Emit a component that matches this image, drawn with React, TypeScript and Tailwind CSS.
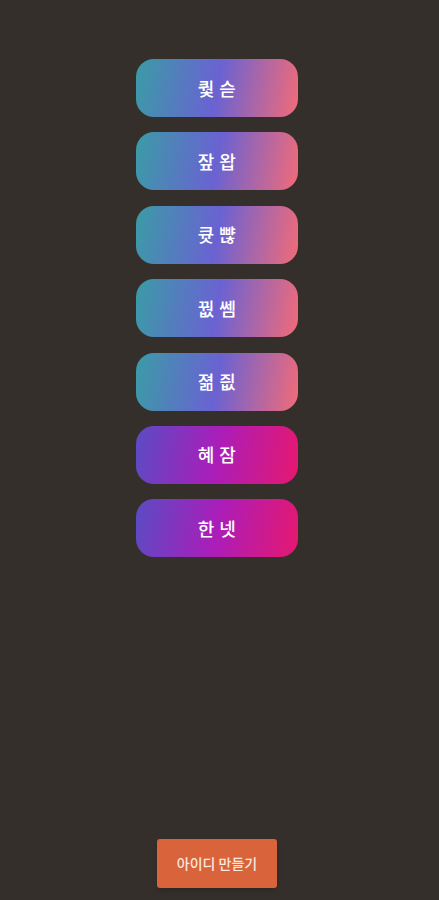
import React from "react";

const words = [
  { label: "퀓 슫", hot: false },
  { label: "잪 왑", hot: false },
  { label: "큣 뺞", hot: false },
  { label: "꿦 쎔", hot: false },
  { label: "졂 즶", hot: false },
  { label: "혜 잠", hot: true },
  { label: "한 넷", hot: true },
];

function WordButton({ label, hot }: { label: string; hot: boolean }) {
  return (
    <button
      className={
        hot
          ? "w-[162px] h-[58px] rounded-[18px] bg-linear-[100deg] from-[#5a4cc4] via-[#ab1db9] to-[#e6186f] text-[18px] font-medium text-white tracking-wide"
          : "w-[162px] h-[58px] rounded-[18px] bg-linear-[100deg] from-[#3a9ca6] via-[#6a62d2] to-[#f26b78] text-[18px] font-medium text-white tracking-wide"
      }
    >
      {label}
    </button>
  );
}

export default function App() {
  return (
    <div
      className="min-h-[900px] bg-[#342f2b] flex flex-col items-center pt-[59px] pb-[12px] pr-[5px]"
      style={{ fontFamily: '"Noto Sans CJK KR", "Noto Sans", sans-serif' }}
    >
      <div className="flex flex-col gap-[15.4px]">
        {words.map((w) => (
          <WordButton key={w.label} label={w.label} hot={w.hot} />
        ))}
      </div>
      <button className="mt-auto w-[120px] h-[49px] rounded-[3px] bg-[#d9633a] text-[14px] font-medium text-[#f8e9df] shadow-md">
        아이디 만들기
      </button>
    </div>
  );
}
